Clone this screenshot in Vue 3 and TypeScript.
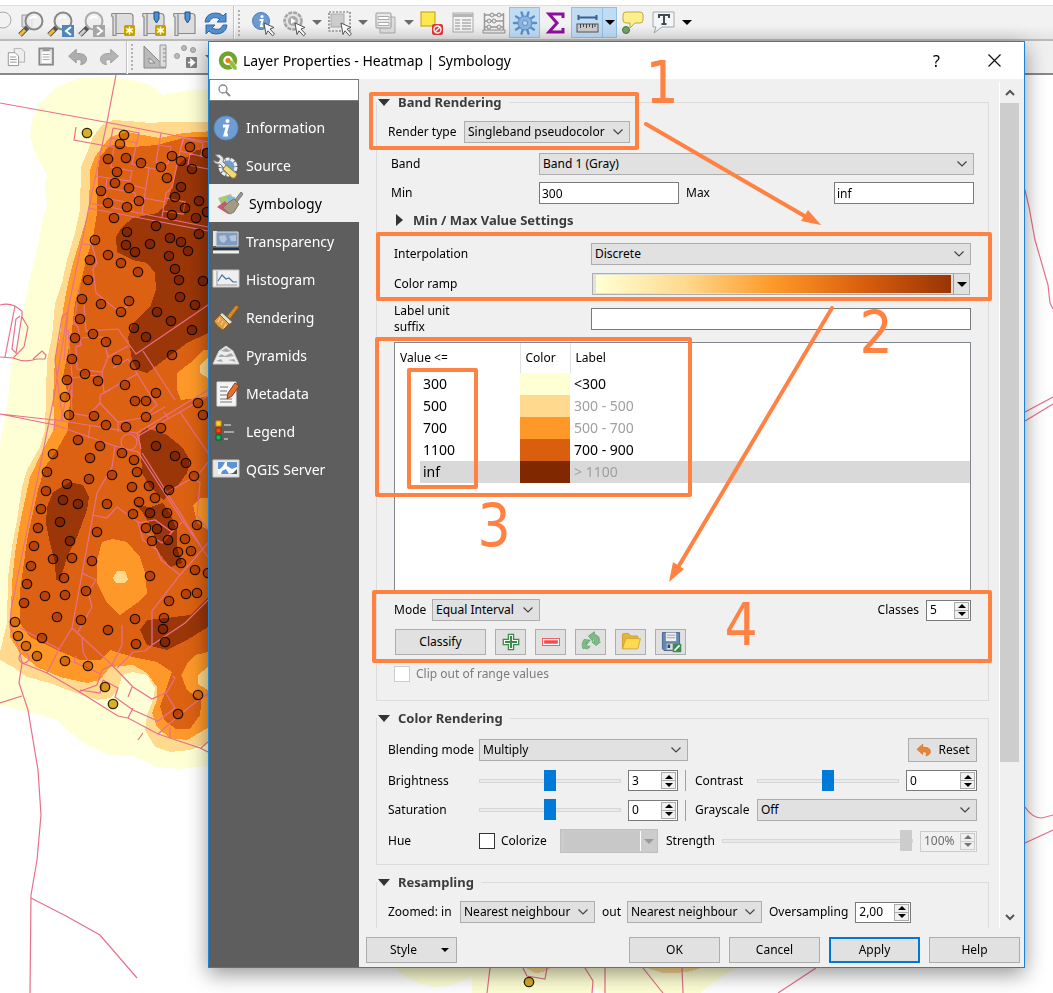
<script setup lang="ts">
import { ref } from 'vue'

interface Tool { icon: string; label: string; caret?: 'dark' | 'dim'; active?: boolean }
interface Page { icon: string; label: string }
interface Entry { value: string; color: string; label: string; auto: boolean }

const lens = (x: number, y: number, ring: string, handle: string) =>
  `<path d="M${x - 6} ${y + 6}L${x - 14} ${y + 14}" stroke="#555" stroke-width="5"/><path d="M${x - 9} ${y + 9}L${x - 14} ${y + 14}" stroke="${handle}" stroke-width="3"/><circle cx="${x}" cy="${y}" r="8.5" fill="#eee" fill-opacity=".8" stroke="${ring}" stroke-width="2"/><path d="M${x - 4} ${y - 2}q3-4 7-1" fill="none" stroke="#fff" stroke-width="2"/>`
const scroll = '<path d="M3 4.5h18q3 0 3 3v17H7v2H4V8q-2 0-1-3.5z" fill="#ddd" stroke="#8b8b8b" stroke-width="1.2"/><path d="M7 5v19" stroke="#8b8b8b" stroke-width="1.2"/>'
const star = '<rect x="15" y="16" width="11" height="11" rx="1.5" fill="#c4a000"/><path d="M20.5 17.500v8M17 19.500l7 4M17 23.500l7-4" stroke="#fff8c0" stroke-width="1.5"/><circle cx="20.5" cy="21.5" r="2" fill="#fff"/>'
const pin = '<path d="M14 3h5v7l-2.500 4-2.500-4z" fill="#4f8fc8" stroke="#1f4f86"/>'
const cursor = '<path d="M15 14l10 4.500-4 1.500 4.500 5-2 1.800-4.500-5-2 3.700z" fill="#fff" stroke="#555"/>'
const arrowBack = '<path d="M3 13l9-8v5q11-1 12 6 0 6-7 7 3-7-5-6v4z" stroke-width="1"/>'
const gearTeeth = (r: number) => {
  let d = ''
  for (let i = 0; i < 10; i++) {
    const a = (i * Math.PI) / 5
    d += `M${Math.round(14 + Math.cos(a) * (r - 5))} ${Math.round(14 + Math.sin(a) * (r - 5))}L${Math.round((14 + Math.cos(a) * r) * 10) / 10} ${Math.round((14 + Math.sin(a) * r) * 10) / 10}`
  }
  return d
}

const icons: Record<string, string> = {
  zoomLayer: `<path d="M6 6h10v12H6z" fill="#ddd" stroke="#999"/>${lens(18, 12, '#888', '#f0c030')}`,
  zoomLast: `${lens(16, 12, '#888', '#f0c030')}<rect x="15" y="16" width="12" height="12" fill="#4f86bd"/><path d="M24 18l-5 4 5 4" fill="none" stroke="#fff" stroke-width="2"/>`,
  zoomNext: `${lens(16, 12, '#aaa', '#ccc')}<rect x="15" y="16" width="12" height="12" fill="#a5a5a5"/><path d="M19 18l5 4-5 4" fill="none" stroke="#fff" stroke-width="2"/>`,
  newMap: scroll + star,
  newPin: scroll + pin + star,
  pinMap: scroll + pin,
  refresh: '<path d="M3 13q1-9 11-9 5 0 7 3l3-3v9h-9l3-3q-8-4-11 3zM25 16q-1 9-11 9-5 0-7-3l-3 3v-9h9l-3 3q8 4 11-3z" fill="#5590cf" stroke="#3068a8"/>',
  identify: `<circle cx="12" cy="12" r="8.5" fill="#6d9bd1" stroke="#4a7db8"/><circle cx="13" cy="7.5" r="1.5" fill="#fff"/><path d="M10.500 11h3l-1.500 6h2" fill="none" stroke="#fff" stroke-width="2"/>${cursor}`,
  action: `<circle cx="13" cy="12" r="8.5" fill="#e4e4e4" stroke="#a5a5a5" stroke-width="2.500" stroke-dasharray="4 1"/><circle cx="13" cy="12" r="5" fill="#aaa"/><path d="M11 9l5 3-5 3z" fill="#fff"/>${cursor}`,
  select: `<rect x="3" y="3" width="21" height="19" fill="none" stroke="#666" stroke-width="1.2" stroke-dasharray="2 1.5"/><rect x="5" y="5" width="13" height="13" fill="#ccc" stroke="#aaa"/>${cursor}`,
  forms: '<path d="M8 8h15v16H8z" fill="#ddd" stroke="#aaa"/><rect x="4" y="4" width="15" height="15" rx="1" fill="#e8e8e8" stroke="#999"/><path d="M6 7.500h11v3H6zM6 13.500h11v3H6z" fill="#fff" stroke="#aaa"/>',
  deselect: '<rect x="3" y="3" width="14" height="14" fill="#fce94f" stroke="#c4a000"/><rect x="14" y="15" width="11" height="11" rx="2" fill="#dd3b3b"/><circle cx="19.5" cy="20.5" r="3.5" fill="none" stroke="#fff" stroke-width="1.3"/><path d="M17 23l5-5" stroke="#fff" stroke-width="1.3"/>',
  tableIcon: '<rect x="4" y="4" width="20" height="19" fill="#f3f3f3" stroke="#aaa"/><path d="M4 5h20v3H4z" fill="#b5b5b5"/><path d="M6 11h5M6 14h5M6 17h5M6 20h5M13 11h9M13 14h9M13 17h9M13 20h9" stroke="#b0b0b0" stroke-width="1.5"/>',
  abacus: '<path d="M4.500 4v19M23.500 4v19M4 6h20M4 12h20M4 18h20" stroke="#999" stroke-width="1.5" fill="none"/><g fill="#e6e6e6" stroke="#909090"><circle cx="12" cy="6" r="2"/><circle cx="19" cy="6" r="2"/><circle cx="9" cy="12" r="2"/><circle cx="14" cy="12" r="2"/><circle cx="9" cy="18" r="2"/><circle cx="19" cy="18" r="2"/><path d="M3 21h22v3H3z"/></g>',
  toolbox: `<path d="${gearTeeth(11)}" stroke="#5b8ec6" stroke-width="2.500" stroke-linecap="round"/><circle cx="14" cy="14" r="7" fill="#8bb3e0" stroke="#5b8ec6"/><circle cx="14" cy="14" r="2.5" fill="#bcdaf3" stroke="#5b8ec6"/>`,
  sigma: '<path d="M21 9V5H7l8 9-8 9h14v-4" fill="none" stroke="#8e0f9c" stroke-width="3"/>',
  ruler: '<path d="M5 8.500h19M5.500 6v5M23.500 6v5" stroke="#3b5f92" stroke-width="2"/><rect x="4" y="15" width="21" height="8" fill="#ccc" stroke="#555"/><path d="M7.500 15v4M10.500 15v3M13.500 15v4M16.500 15v3M19.500 15v4M22 15v3" stroke="#444"/>',
  tip: '<path d="M7 3h14q3 0 3 3v5q0 3-3 3h-5l-5 5v-5H7q-3 0-3-3V6q0-3 3-3z" fill="#fcf08c" stroke="#c4a83c"/><circle cx="7" cy="21" r="3.5" fill="#6fa36f" stroke="#3f7a45"/>',
  annotate: '<path d="M3 3h21v15H12l-8 6 2-6H3z" fill="#f4f5f6" stroke="#a2aaae"/><path d="M9 9V6h10v3M14 6v9M11.500 15h5" fill="none" stroke="#444b50" stroke-width="2"/>',
  copy: '<path d="M12 4h8l4 4v12H12z" fill="#eee" stroke="#aaa"/><path d="M5 9h8l4 4v11H5z" fill="#fff" stroke="#888"/><path d="M7 14h7M7 17h8M7 20h8" stroke="#888"/>',
  paste: '<rect x="5" y="4" width="16" height="19" fill="#ddd" stroke="#888" stroke-width="2"/><path d="M9 3h8v4H9z" fill="#999"/><path d="M8 8h10v13H8z" fill="#fff"/><path d="M9 11h8M9 14h8M9 17h8" stroke="#999"/>',
  undo: `<g fill="#adadad" stroke="#989898">${arrowBack}</g>`,
  redo: `<g fill="#b4b4b4" stroke="#9c9c9c" transform="translate(28 0) scale(-1 1)">${arrowBack}</g>`,
  square: '<path d="M2 3v22h22z" fill="#bbb" stroke="#888"/><path d="M7 15v5h6z" fill="#eee" stroke="#888"/><path d="M18 2h6v22h-6z" fill="#ddd" stroke="#999"/><path d="M21 6h3M21 10h3M21 14h3M21 18h3" stroke="#888"/>',
  nodes: '<g fill="#bbb" stroke="#999"><circle cx="4" cy="13" r="2.5"/><circle cx="11" cy="5" r="2.5"/><circle cx="20" cy="7" r="2.5"/></g><rect x="13" y="14" width="11" height="11" rx="1" fill="#808080"/><path d="M15 19.500h4M18 16.500l3.500 3-3.500 3z" fill="#fff" stroke="#fff" stroke-width="1.5"/>',
  info: '<circle cx="14" cy="14" r="12" fill="#6d9dd3" stroke="#5688c2"/><circle cx="15.5" cy="7" r="2" fill="#fff"/><path d="M11 12h4.500l-2.500 9h3" fill="none" stroke="#fff" stroke-width="3"/>',
  source: '<circle cx="16" cy="15" r="8" fill="#6e9ed2" stroke="#eee" stroke-width="3" stroke-dasharray="4 1"/><path d="M3 3q5-2 8 2 1 3 0 5l7 6-3 3-7-7q-5 1-7-4l5 2 2-3z" fill="#e9e9e9" stroke="#777"/><path d="M14 13l11 9-2 4-3 0-9-9z" fill="#f1d977" stroke="#9a7e28"/>',
  symbology: '<path d="M3 8l13-4 3 8-12 4z" fill="#a8c77b"/><path d="M12 6l8 1 2 11-8-2z" fill="#86b6e0"/><path d="M2 17l8-6 8 10-5 3z" fill="#cd5577"/><path d="M14 12l5-3 5 5-5 8-4 2-7-6z" fill="#a39b84" stroke="#807966"/><path d="M20 10l6-8 2 2-6 8z" fill="#9a9a86" stroke="#777"/>',
  transparency: '<path d="M1 3h4v15H1z" fill="#e6e6e6"/><path d="M4 4h22v14H4z" fill="#7f9cc2" stroke="#ddd"/><path d="M7 8l6-1 2 4-3 4-4-2zM17 8l7-1v6l-5 0z" fill="#b5c5dc"/><path d="M1 20h26v2H1z" fill="#233347"/><path d="M1 22.500h26v3H1z" fill="#eee"/>',
  histogram: '<path d="M1 4h26v17H1z" fill="#efefef" stroke="#c4c4c4"/><path d="M5 5v15M5 19h20" stroke="#999"/><path d="M6 15l4-6 4 4 3-1 4 4 4 0" fill="none" stroke="#4474a8" stroke-width="1.2"/>',
  rendering: '<path d="M15 12L24 1l3 2-9 12z" fill="#d08c2c" stroke="#8f5a12"/><path d="M10 9l10 9-3 2L8 11z" fill="#e8e0cc"/><path d="M8 11l9 9-6 6q-6-3-9-9z" fill="#e0a048" stroke="#96601a"/><path d="M8 14l-2 4M11 17l-2 4M14 20l-2 4" stroke="#fadb9d"/>',
  pyramids: '<path d="M7 9l7-5 7 5 6 13H1z" fill="#eee" stroke="#ccc"/><path d="M9 9l5-3 5 3-4 1zM6 15l3-3 4 2 6-3 3 3-6 1zM4 19l5-2 2 3zM16 18l6-1 2 3z" fill="#a9a9a9"/>',
  metadata: '<path d="M5 2h19v24H5z" fill="#f4f4f4" stroke="#ddd"/><path d="M8 7h8M8 11h7M8 15h12M8 19h12M8 22h12" stroke="#777"/><path d="M16 13l7-10 4 3-7 10-5 3z" fill="#e76f30" stroke="#8f3d13"/>',
  legend: '<path d="M4 3h5v5H4z" fill="#ffd428" stroke="#e09000"/><path d="M4 10h5v5H4z" fill="#f14a1b" stroke="#a82200"/><path d="M4 17h5v5H4z" fill="#1bb368" stroke="#00602b"/><path d="M12 7h7M12 14h10M12 21h4" stroke="#a5a5a5" stroke-width="2"/>',
  server: '<path d="M1 4h26v17H1z" fill="#e8e8e8" stroke="#ccc"/><path d="M6 6h19v12H6z" fill="#fff"/><path d="M6 6h7l-2 4-3 3H6zM15 6h10v5l-5 2-5-3zM10 15l4-2 3 5H9z" fill="#5a94d4"/><path d="M25 13v5h-8l4-1z" fill="#555"/>',
  add: '<path d="M11 5h6v6h6v6h-6v6h-6v-6H5v-6h6z" fill="#fff" stroke="#3d8a4c" stroke-width="1.5"/><path d="M14 7v14M7 14h14" stroke="#3d8a4c" stroke-width="2.500"/>',
  remove: '<rect x="4" y="10" width="20" height="8" fill="#fff" stroke="#f34a4a"/><path d="M6 14h16" stroke="#f34a4a" stroke-width="4"/>',
  swap: '<path d="M13 12l-7-1q-4 6-1 11l2-1q3 3 6-2h-3q-3-2-1-5v3zM11 7l7-5v3q6 2 6 6l-1 3 2 0-5 4-5-4h3q1-4-2-4v3z" fill="#7fba89" stroke="#66a572"/>',
  open: '<path d="M4 22V6q0-2 2-2h5l3 3h8v5H9z" fill="#e2b53c" stroke="#c99a26"/><path d="M4 22l4-12h17l-3 12z" fill="#ffd94f" stroke="#d0a32c"/>',
  save: '<path d="M4 3h20v21H6l-2-2z" fill="#6688b3" stroke="#3a5c88"/><path d="M8 3h12v10H8z" fill="#eee"/><path d="M9 6h10M9 9h10" stroke="#999"/><path d="M9 16h9v7H9z" fill="#ddd"/><path d="M10 17h3v4h-3z" fill="#345"/><rect x="16" y="16" width="10" height="10" rx="1" fill="#3d8a4c"/><path d="M18 24l6-6" stroke="#fff" stroke-width="2"/>',
  reset: `<g fill="#e8853c" stroke="#d06a24">${arrowBack}</g>`,
}

const mapTools: Tool[] = [
  { icon: 'zoomLayer', label: 'Zoom to layer' }, { icon: 'zoomLast', label: 'Zoom last' }, { icon: 'zoomNext', label: 'Zoom next' },
  { icon: 'newMap', label: 'New map view' }, { icon: 'newPin', label: 'New bookmark' }, { icon: 'pinMap', label: 'Show bookmarks' }, { icon: 'refresh', label: 'Refresh' },
]
const attributeTools: Tool[] = [
  { icon: 'identify', label: 'Identify' }, { icon: 'action', label: 'Run action', caret: 'dim' }, { icon: 'select', label: 'Select', caret: 'dim' },
  { icon: 'forms', label: 'Select by form', caret: 'dim' }, { icon: 'deselect', label: 'Deselect' }, { icon: 'tableIcon', label: 'Attribute table' },
  { icon: 'abacus', label: 'Field calculator' }, { icon: 'toolbox', label: 'Processing toolbox', active: true }, { icon: 'sigma', label: 'Statistics' },
  { icon: 'ruler', label: 'Measure', caret: 'dark', active: true }, { icon: 'tip', label: 'Map tips' }, { icon: 'annotate', label: 'Text annotation', caret: 'dark' },
]
const editTools: Tool[] = [
  { icon: 'copy', label: 'Copy' }, { icon: 'paste', label: 'Paste' }, { icon: 'undo', label: 'Undo' }, { icon: 'redo', label: 'Redo' },
]
const digitizeTools: Tool[] = [{ icon: 'square', label: 'Advanced digitizing' }, { icon: 'nodes', label: 'Move features', caret: 'dim' }]

const pages: Page[] = [
  { icon: 'info', label: 'Information' }, { icon: 'source', label: 'Source' }, { icon: 'symbology', label: 'Symbology' },
  { icon: 'transparency', label: 'Transparency' }, { icon: 'histogram', label: 'Histogram' }, { icon: 'rendering', label: 'Rendering' },
  { icon: 'pyramids', label: 'Pyramids' }, { icon: 'metadata', label: 'Metadata' }, { icon: 'legend', label: 'Legend' }, { icon: 'server', label: 'QGIS Server' },
]
const current = ref('Symbology')

const entries: Entry[] = [
  { value: '300', color: '#ffffd4', label: '<300', auto: false },
  { value: '500', color: '#fed98e', label: '300 - 500', auto: true },
  { value: '700', color: '#fe9929', label: '500 - 700', auto: true },
  { value: '1100', color: '#d95f0e', label: '700 - 900', auto: false },
  { value: 'inf', color: '#802900', label: '> 1100', auto: true },
]
const selected = ref('inf')
const classTools: Tool[] = [
  { icon: 'add', label: 'Add value' }, { icon: 'remove', label: 'Remove value' }, { icon: 'swap', label: 'Invert ramp' },
  { icon: 'open', label: 'Load color map' }, { icon: 'save', label: 'Save color map' },
]

const min = ref('300')
const max = ref('inf')
const suffix = ref('')
const classes = ref('5')
const brightness = ref('3')
const saturation = ref('0')
const contrast = ref('0')
const strength = ref('100%')
const oversampling = ref('2,00')

const points: number[][] = [
  [87,133],[124,135],[120,144],[108,159],[126,158],[141,163],[117,172],[115,183],[129,188],[101,191],[108,203],[127,207],[139,201],[114,218],
  [161,167],[172,156],[181,161],[190,147],[192,169],[167,178],[181,187],[175,197],[199,201],[185,208],[172,215],[196,218],[156,226],[199,234],
  [127,232],[170,238],[181,242],[126,245],[150,244],[135,252],[188,251],[169,256],[95,240],[108,255],[121,263],[90,260],[138,272],[175,269],
  [179,280],[203,281],[88,280],[82,299],[101,304],[129,301],[121,312],[180,297],[195,305],[157,312],[171,321],[80,319],[134,328],[146,337],
  [192,330],[93,334],[106,342],[75,338],[72,359],[117,360],[172,355],[135,365],[85,374],[98,381],[67,380],[125,385],[156,393],[65,397],
  [207,153],[207,212],[135,401],[146,401],[69,415],[94,416],[106,425],[126,427],[146,417],[161,428],[198,403],[203,415],[78,440],[100,446],
  [53,454],[90,458],[122,453],[134,460],[156,446],[175,456],[186,463],[194,476],[47,472],[89,479],[112,475],[137,472],[132,487],[149,486],
  [155,498],[169,490],[67,484],[46,491],[63,500],[78,504],[107,504],[139,502],[41,509],[133,514],[150,513],[167,513],[60,522],[173,525],
  [197,525],[146,528],[157,529],[38,528],[97,532],[70,541],[152,541],[168,540],[185,539],[34,546],[178,552],[191,551],[53,559],[72,558],
  [92,561],[181,563],[31,566],[195,570],[208,573],[64,578],[150,576],[27,584],[86,591],[45,596],[65,595],[186,594],[197,593],[24,603],
  [169,601],[57,617],[135,619],[164,618],[81,620],[15,622],[108,630],[163,629],[18,636],[42,638],[165,642],[136,644],[26,646],[37,656],
  [65,661],[88,666],[105,687],[113,704],[198,695],[178,714],[529,982],
]

const roads = [
  'M0 103L105 122 208 142', 'M116 75L107 122 89 207 68 310 54 397 11 610 10 627 19 648 22 663 19 683 28 710 38 770 41 815 37 860 31 895 30 993',
  'M0 703L22 696', 'M31 898L66 916 100 935 137 978', 'M89 203L208 227M88 208L208 231', 'M76 127L74 140 112 147',
  'M113 128L110 145 114 147 111 167 132 171 130 181 95 176', 'M113 128L139 133 132 164 149 168 142 213', 'M111 138L137 143M149 168L167 171',
  'M161 133L156 162 168 164M158 145L171 147 168 164', 'M183 138L172 188 166 193 162 217', 'M166 198L185 202 183 214 163 211M144 198L165 202',
  'M180 151L208 158M190 153L188 165 208 169M183 138L203 143 201 156M180 151L184 138', 'M107 178L105 198 136 204 135 193 107 188M132 185L146 189',
  'M82 244L92 245 97 263 93 269 96 293 117 310 127 307 125 298', 'M84 305L86 331 118 329 136 354 208 305', 'M143 351L175 400',
  'M80 284L74 323 78 327 81 345 76 347 77 369 102 372 108 357 103 337 81 338', 'M108 357L128 346M113 368L128 359 147 390 157 405 143 418',
  'M100 395L137 374M102 372L104 393', 'M68 312L62 317 55 360 60 400 63 421', 'M72 398L72 378 97 375M61 420L72 375 68 330M68 312L64 360',
  'M0 305Q8 303 15 306L22 311 22 317 28 327 24 347 13 358Q25 363 37 359L45 359 46 355 42 351 33 359M15 306L5 357M0 357L13 358M20 316L16 319 12 349 16 353 22 315',
  'M0 414L63 421 137 433 208 390M0 414L55 425 115 446 138 452 182 520 208 557', 'M138 436L208 396M142 453L202 548M137 433L141 449',
  'M71 390L72 413 88 416 100 403 100 395 110 390M100 403L118 422 147 417 165 407M118 422L118 432M180 412L208 453',
  'M115 446L112 467 97 493 72 628 59 649 47 673', 'M93 515L107 518 117 507 138 522 143 540 157 550 161 560 180 575', 'M208 543L180 575 152 611 152 645',
  'M138 523L155 520 172 532 162 543 147 533M172 532L182 522', 'M208 600L185 623 152 645 145 651 133 652 117 668', 'M20 628L59 649',
  'M72 628L110 663 133 687 152 699 167 692 175 678 172 676', 'M82 637L83 652 88 661M122 625L122 645 112 665 102 670 97 685 78 692',
  'M22 663L47 673 78 691 118 716 128 718 158 734 200 748 208 752', 'M208 694L192 705 177 717 158 734M165 692L175 708 158 721 133 710 115 697 118 688 103 680',
  'M103 680L100 693 80 690M128 718L133 708M76 656L74 662 101 674M128 697L132 687M170 727L170 739M201 748L208 742', 'M82 573L96 580 88 592 92 607 78 632',
  'M167 492L198 475 208 462M188 473L200 483 197 515 208 530', 'M138 740L143 733', 'M90 426L88 438M164 412L168 418M55 418L54 430',
  'M1025 190L1029 207 1035 240 1048 285 1050 303 1053 309', 'M1025 807Q1032 818 1042 818L1053 815M1025 843L1053 830M1025 412L1053 397M1025 421L1053 404',
  'M490 968L487 993M523 968L527 976 545 979 547 968M585 968L590 976 593 981 592 993M605 968L605 993M643 968L663 993M682 968L683 993M816 968L778 993',
].join('')
</script>

<template>
  <div class="desktop">
    <svg class="map" width="1053" height="993" viewBox="0 0 1053 993" aria-hidden="true">
      <g shape-rendering="crispEdges">
        <path fill="#ffffd5" d="M230 90L190 90 173 93 163 95 150 85 133 80 110 77 80 78 57 87 40 103 32 120 30 137 35 153 47 175 45 183 47 207 43 217 37 250 30 277 25 303 20 337 12 357 8 400 0 445V705L20 710 40 715 57 720 67 730 87 745 110 755 133 756 143 760 157 767 180 769 230 763z" />
        <path fill="#fed98e" d="M230 122L163 122 150 123 128 121 113 120 102 125 93 137 87 153 81 167 80 210 75 233 67 260 62 283 55 303 52 337 47 360 45 430 40 447 27 470 22 487 17 520 12 547 8 577 7 623 0 652V660L13 667 27 677 50 683 73 692 97 700 110 698 118 690 122 675 133 672 147 675 155 688 153 700 147 715 145 730 155 747 170 752 190 750 230 735z" />
        <path fill="#fe9929" d="M230 130L183 133 160 138 143 135 127 132 110 137 102 147 95 157 90 170 89 210 82 233 73 263 68 283 63 310 60 337 55 357 53 400 55 427 43 450 30 477 25 500 20 523 15 553 12 583 10 637 20 653 37 667 60 677 87 683 100 680 110 667 133 665 147 673 157 687 157 700 152 713 157 727 170 738 187 740 230 715z" />
        <path fill="#dc6112" d="M230 137L187 137 157 145 133 147 110 145 100 157 98 170 97 213 93 237 87 257 82 277 75 303 72 330 67 357 63 377 70 400 68 430 57 450 45 467 38 490 32 517 27 540 23 570 20 590 20 623 30 637 57 650 80 660 100 660 110 650 133 657 157 662 172 672 166 690 160 706 164 720 176 729 190 729 200 715 202 695 195 685 181 676 187 664 195 655 230 647z" />
        <path fill="#fe9929" d="M177 390V373L190 363 203 350 230 348V394L181 400zM193 505L200 498 230 497V530H208L197 523zM102 542L113 539 127 542 140 557 145 573 147 593 137 603 120 615 107 603 97 583 97 560zM182 677L190 669 230 660V700H200L187 690z" />
        <path fill="#fed98e" d="M200 365L208 358V378L200 373zM117 571H125L128 579 124 583H116L113 578zM198 675L208 667V690L198 684z" />
        <path fill="#9b3608" d="M208 148L197 150 183 160 177 167 172 187 167 203 157 213 133 218 122 227 116 237 117 252 133 260 147 263 155 273 156 290 150 307 133 323 128 337 132 360 137 370 147 373 160 363 187 343 208 333zM47 507L53 492 70 482 83 485 89 497 87 510 77 537 67 557 60 581 56 580 55 563 50 543 46 523zM140 433L147 428 167 435 182 447 190 460 187 473 177 487 163 500 150 487 142 473zM135 505L150 507 163 503 170 513 177 530 177 547 182 563 170 567 157 550 153 530 143 513zM140 630L147 620 167 618 190 615 208 597V627L187 640 167 650 147 645z" />
        <path fill="#ffffd5" d="M394 967Q415 987 438 987 455 986 472 976V993H590L596 988 605 993H700Q720 977 737 967z" />
        <path fill="#fed98e" d="M525 967H552Q545 973 535 973zM644 967H702Q690 974 662 973z" />
      </g>
      <g fill="none" stroke="#e8708b" stroke-width="1.2">
        <path :d="roads" />
        <circle cx="129" cy="442" r="8" />
        <circle cx="24" cy="658" r="5" />
      </g>
      <g class="points" fill="#d7b02e" stroke="#2b2106" stroke-width="1.3">
        <circle v-for="(p, i) in points" :key="i" :cx="p[0]" :cy="p[1]" r="4.7" />
      </g>
    </svg>

    <div class="bars">
      <div class="bar">
        <svg class="clipped" viewBox="0 0 14 28" width="14" height="28" aria-hidden="true"><circle cx="3" cy="11" r="8" fill="#f2f2f2" stroke="#aaa" /></svg>
        <button v-for="t in mapTools" :key="t.icon" class="tool" :aria-label="t.label"><svg viewBox="0 0 28 28" width="28" height="28" v-html="icons[t.icon]" /></button>
        <span class="divider"></span><span class="grip"></span>
        <span v-for="t in attributeTools" :key="t.icon" class="pair" :class="{ active: t.active }">
          <button class="tool" :aria-label="t.label"><svg viewBox="0 0 28 28" width="28" height="28" v-html="icons[t.icon]" /></button>
          <button v-if="t.caret" class="caret" :class="t.caret" :aria-label="t.label + ' menu'"><i></i></button>
        </span>
      </div>
      <div class="bar">
        <button v-for="t in editTools" :key="t.icon" class="tool" :aria-label="t.label"><svg viewBox="0 0 28 28" width="24" height="24" v-html="icons[t.icon]" /></button>
        <span class="divider"></span><span class="grip"></span>
        <span v-for="t in digitizeTools" :key="t.icon" class="pair">
          <button class="tool" :aria-label="t.label"><svg viewBox="0 0 28 28" width="28" height="28" v-html="icons[t.icon]" /></button>
          <button v-if="t.caret" class="caret" :class="t.caret" :aria-label="t.label + ' menu'"><i></i></button>
        </span>
      </div>
    </div>

    <div class="dialog" role="dialog" aria-labelledby="dialog-title">
      <header class="titlebar">
        <svg viewBox="0 0 20 20" width="20" height="20" aria-hidden="true">
          <circle cx="10" cy="9.5" r="7" fill="none" stroke="#6fa52c" stroke-width="4.5" />
          <path d="M11 10l3-1 5 7v3h-3l-5-6z" fill="#8fbf3c" stroke="#fff" stroke-width=".6" />
          <circle cx="10" cy="9.5" r="2.5" fill="#ee7913" />
        </svg>
        <h1 id="dialog-title">Layer Properties - Heatmap | Symbology</h1>
        <button class="window-button">?</button>
        <button class="window-button close" aria-label="Close"><svg viewBox="0 0 13 13" width="13" height="13"><path d="M.5.5l12 12M12.500.5l-12 12" stroke="#111" stroke-width="1.2" /></svg></button>
      </header>

      <div class="body">
        <aside class="sidebar">
          <label class="search">
            <svg viewBox="0 0 14 14" width="14" height="14"><circle cx="6" cy="6" r="4" fill="none" stroke="#888" stroke-width="1.3" /><path d="M9 9l4 4" stroke="#888" stroke-width="1.8" /></svg>
            <input type="text" aria-label="Search" />
          </label>
          <nav>
            <button v-for="p in pages" :key="p.label" class="page" :class="{ current: current === p.label }" @click="current = p.label">
              <svg viewBox="0 0 28 28" width="28" height="28" aria-hidden="true" v-html="icons[p.icon]" />{{ p.label }}
            </button>
          </nav>
        </aside>

        <main class="main">
          <div class="viewport">
            <div class="groups">
              <fieldset class="group">
                <legend><i class="fold"></i>Band Rendering</legend>
                <div class="row first">
                  <label for="render" class="w76">Render type</label>
                  <span class="combo c166"><select id="render"><option>Singleband pseudocolor</option></select><svg viewBox="0 0 10 6" width="10" height="6"><path d="M.5.5L5 5 9.500.5" /></svg></span>
                </div>
                <div class="inner">
                  <div class="row">
                    <label for="band" class="w148">Band</label>
                    <span class="combo grow"><select id="band"><option>Band 1 (Gray)</option></select><svg viewBox="0 0 10 6" width="10" height="6"><path d="M.5.5L5 5 9.500.5" /></svg></span>
                  </div>
                  <div class="row near">
                    <label for="min" class="w148">Min</label>
                    <input id="min" v-model="min" class="field c140" type="text" />
                    <label for="max" class="push">Max</label>
                    <input id="max" v-model="max" class="field c140" type="text" />
                  </div>
                  <button class="subgroup"><i class="unfold"></i>Min / Max Value Settings</button>
                </div>
                <div class="deep">
                  <div class="row">
                    <label for="interp" class="w197">Interpolation</label>
                    <span class="combo grow"><select id="interp"><option>Discrete</option></select><svg viewBox="0 0 10 6" width="10" height="6"><path d="M.5.5L5 5 9.500.5" /></svg></span>
                  </div>
                  <div class="row">
                    <span class="w197">Color ramp</span>
                    <span class="ramp"><button class="ramp-face" aria-label="Color ramp"><b></b></button><button class="ramp-menu" aria-label="Choose color ramp"><i></i></button></span>
                  </div>
                  <div class="row">
                    <label for="suffix" class="w197"><span class="narrow">Label unit suffix</span></label>
                    <input id="suffix" v-model="suffix" class="field grow" type="text" />
                  </div>
                  <div class="tree">
                    <table>
                      <thead><tr><th class="col-value">Value &lt;=</th><th class="col-color">Color</th><th>Label</th></tr></thead>
                      <tbody>
                        <tr v-for="e in entries" :key="e.value" :class="{ picked: selected === e.value }" @click="selected = e.value">
                          <td class="value">{{ e.value }}</td>
                          <td :style="{ background: e.color }"></td>
                          <td :class="{ auto: e.auto }">{{ e.label }}</td>
                        </tr>
                      </tbody>
                    </table>
                  </div>
                  <div class="row near">
                    <label for="mode" class="w38">Mode</label>
                    <span class="combo c108"><select id="mode"><option>Equal Interval</option></select><svg viewBox="0 0 10 6" width="10" height="6"><path d="M.5.5L5 5 9.500.5" /></svg></span>
                    <span class="grow"></span>
                    <label for="classes">Classes</label>
                    <span class="spin s45 gap"><input id="classes" v-model="classes" type="text" /><span class="steps"><button aria-label="More"><i class="up"></i></button><button aria-label="Fewer"><i class="down"></i></button></span></span>
                  </div>
                  <div class="row class-tools">
                    <button class="push-button">Classify</button>
                    <button v-for="t in classTools" :key="t.icon" class="icon-button" :aria-label="t.label"><svg viewBox="0 0 28 28" width="24" height="24" v-html="icons[t.icon]" /></button>
                  </div>
                  <label class="check off"><input type="checkbox" disabled />Clip out of range values</label>
                </div>
              </fieldset>

              <fieldset class="group color">
                <legend><i class="fold"></i>Color Rendering</legend>
                <div class="row blend">
                  <label for="blend" class="w91">Blending mode</label>
                  <span class="combo c209"><select id="blend"><option>Multiply</option></select><svg viewBox="0 0 10 6" width="10" height="6"><path d="M.5.5L5 5 9.500.5" /></svg></span>
                  <span class="grow"></span>
                  <button class="reset"><svg viewBox="0 0 28 28" width="18" height="18" v-html="icons.reset" />Reset</button>
                </div>
                <div class="row">
                  <label for="brightness" class="w91">Brightness</label>
                  <input class="slider c142" type="range" min="-255" max="255" value="0" aria-label="Brightness" />
                  <span class="spin s50 gap"><input id="brightness" v-model="brightness" type="text" /><span class="steps"><button aria-label="Up"><i class="up"></i></button><button aria-label="Down"><i class="down"></i></button></span></span>
                  <span class="rule"></span>
                  <label for="contrast" class="w62">Contrast</label>
                  <input class="slider grow" type="range" min="-100" max="100" value="0" aria-label="Contrast" />
                  <span class="spin s71 gap"><input id="contrast" v-model="contrast" type="text" /><span class="steps"><button aria-label="Up"><i class="up"></i></button><button aria-label="Down"><i class="down"></i></button></span></span>
                </div>
                <div class="row">
                  <label for="saturation" class="w91">Saturation</label>
                  <input class="slider c142" type="range" min="-100" max="100" value="0" aria-label="Saturation" />
                  <span class="spin s50 gap"><input id="saturation" v-model="saturation" type="text" /><span class="steps"><button aria-label="Up"><i class="up"></i></button><button aria-label="Down"><i class="down"></i></button></span></span>
                  <span class="rule"></span>
                  <label for="gray" class="w62">Grayscale</label>
                  <span class="combo grow"><select id="gray"><option>Off</option></select><svg viewBox="0 0 10 6" width="10" height="6"><path d="M.5.5L5 5 9.500.5" /></svg></span>
                </div>
                <div class="row">
                  <span class="w91">Hue</span>
                  <label class="check colorize"><input type="checkbox" />Colorize</label>
                  <button class="swatch" disabled aria-label="Colorize color"><b></b><i></i></button>
                  <label for="strength" class="w64">Strength</label>
                  <input class="slider grow" type="range" min="0" max="100" value="100" disabled aria-label="Strength" />
                  <span class="spin s57 gap off"><input id="strength" v-model="strength" type="text" disabled /><span class="steps"><button disabled aria-label="Up"><i class="up"></i></button><button disabled aria-label="Down"><i class="down"></i></button></span></span>
                </div>
              </fieldset>

              <fieldset class="group open">
                <legend><i class="fold"></i>Resampling</legend>
                <div class="row first">
                  <label for="zin" class="w72">Zoomed: in</label>
                  <span class="combo c135"><select id="zin"><option>Nearest neighbour</option></select><svg viewBox="0 0 10 6" width="10" height="6"><path d="M.5.5L5 5 9.500.5" /></svg></span>
                  <label for="zout" class="w32">out</label>
                  <span class="combo c135"><select id="zout"><option>Nearest neighbour</option></select><svg viewBox="0 0 10 6" width="10" height="6"><path d="M.5.5L5 5 9.500.5" /></svg></span>
                  <label for="over" class="gap">Oversampling</label>
                  <span class="spin s56 gap"><input id="over" v-model="oversampling" type="text" /><span class="steps"><button aria-label="Up"><i class="up"></i></button><button aria-label="Down"><i class="down"></i></button></span></span>
                </div>
              </fieldset>
            </div>

            <div class="scrollbar">
              <button aria-label="Scroll up"><svg viewBox="0 0 10 7" width="10" height="7"><path d="M1 6l4-4 4 4" /></svg></button>
              <div class="track"><div class="thumb"></div></div>
              <button aria-label="Scroll down"><svg viewBox="0 0 10 7" width="10" height="7"><path d="M1 1l4 4 4-4" /></svg></button>
            </div>
          </div>

          <footer class="footer">
            <button class="push-button style">Style<i></i></button>
            <span class="grow"></span>
            <button class="push-button">OK</button>
            <button class="push-button">Cancel</button>
            <button class="push-button default">Apply</button>
            <button class="push-button">Help</button>
          </footer>
        </main>
      </div>
    </div>

    <svg class="notes" width="1053" height="993" viewBox="0 0 1053 993">
      <g fill="none" stroke="#ff8243" stroke-width="4" stroke-linejoin="round" stroke-linecap="round">
        <rect x="371" y="94" width="266" height="54" />
        <rect x="378" y="234" width="612" height="65" />
        <rect x="377" y="339" width="313" height="156" />
        <rect x="409" y="370" width="67" height="117" />
        <rect x="374" y="592" width="616" height="69" />
        <path d="M646 124L808 218M832 308L677 569" />
      </g>
      <path d="M821 225L801 221 808 210zM669 582L673 562 684 569z" fill="#ff8243" />
      <g class="digits">
        <text x="662" y="103">1</text>
        <text x="876" y="353">2</text>
        <text x="494" y="546">3</text>
        <text x="741" y="645">4</text>
      </g>
    </svg>
  </div>
</template>

<style>
html, body { margin: 0; background: #fff; }
</style>

<style scoped>
* { box-sizing: border-box; }
.desktop { position: relative; min-height: 100vh; overflow: hidden; background: #fff; padding: 41px 28px 25px 208px; font: 12px/16px "Noto Sans", "Open Sans", sans-serif; color: #000; }
button, input, select { font: inherit; color: inherit; margin: 0; padding: 0; border: 0; border-radius: 0; background: none; }
svg { display: block; flex: none; }
i, b { display: block; }
.map { position: absolute; left: 0; top: 0; }
.points { mix-blend-mode: multiply; }

.bars { position: absolute; left: 0; right: 0; top: 0; padding-top: 5px; background: #fff; border-bottom: 2px solid #84888d; }
.bar { display: flex; align-items: center; height: 34px; background: linear-gradient(#f2f2f2 60%, #e4e4e4); border-top: 1px solid #dedede; }
.bar + .bar { border-top: 2px solid #bababa; background: #f0f0f0; }
.tool { display: grid; place-items: center; width: 31px; height: 31px; flex: none; }
.divider { width: 2px; height: 33px; margin: 0 3px 0 2px; background: #c2c2c2; border-right: 1px solid #fff; flex: none; }
.grip { width: 2px; height: 26px; margin-right: 7px; background: repeating-linear-gradient(#b4b4b4 0 2px, transparent 2px 4px); flex: none; }
.pair { display: flex; flex: none; }
.pair.active { background: #bfdcf3; box-shadow: inset 0 0 0 1px #90c1ea; }
.pair.active .caret { border-left: 1px solid #90c1ea; }
.caret { display: grid; place-items: center; width: 15px; flex: none; }
.caret i { border: 5px solid transparent; border-top-color: #000; border-bottom: 0; }
.caret.dim i { border-top-color: #6b6b6b; }

.dialog { position: relative; border: 1px solid #1883d7; background: #f0f0f0; box-shadow: 0 6px 20px rgba(0, 0, 0, .42); }
.titlebar { display: flex; align-items: center; height: 37px; padding-left: 9px; background: #fff; }
.titlebar h1 { flex: 1; margin: 0 0 0 5px; font: 14px/20px "Noto Sans", sans-serif; }
.window-button { display: grid; place-items: center; width: 57px; height: 36px; font-size: 16px; }
.close { width: 58px; margin-right: 1px; }
.body { display: flex; }
.sidebar { width: 150px; flex: none; background: #5e5e5e; }
.search { display: flex; align-items: center; height: 22px; padding-left: 7px; background: #fff; border: 1px solid #7a7a7a; }
.search input { flex: 1; min-width: 0; outline: 0; }
.sidebar nav { padding-top: 7px; }
.page { display: flex; align-items: center; gap: 6px; width: 100%; height: 38px; padding: 1px 0 0 3px; color: #fff; font-size: 14px; text-align: left; }
.page.current { background: #f0f0f0; color: #000; padding-left: 6px; }

.main { flex: 1; min-width: 0; }
.viewport { display: flex; }
.groups { flex: 1; min-width: 0; padding: 14px 10px 0 17px; }
.group { min-width: 0; margin: 0 0 8px; padding: 0 0 18px; border: 1px solid #dcdcdc; }
.group.color { padding: 1px 11px 11px; }
.group.color legend { margin-left: -11px; }
.group.open { margin: 0; padding-bottom: 5px; border-bottom: 0; }
legend { display: flex; align-items: center; height: 18px; padding: 0 7px 0 1px; font-size: 13px; font-weight: bold; color: #3c3c3c; }
.fold { margin-right: 8px; border: 6px solid transparent; border-top: 7px solid #333; border-bottom: 0; }
.unfold { margin-right: 10px; border: 6px solid transparent; border-left: 7px solid #333; border-right: 0; }
.row { display: flex; align-items: center; margin-top: 8px; white-space: nowrap; }
.row.first { margin-top: 10px; padding-left: 11px; }
.row.near { margin-top: 7px; }
.row.blend { margin-top: 10px; }
.inner { padding: 2px 14px 0; }
.deep { padding: 6px 17px 0; }
.subgroup { display: flex; align-items: center; height: 18px; margin: 7px 0 0 5px; font-size: 13px; font-weight: bold; color: #3c3c3c; }
.grow { flex: 1; min-width: 0; }
.push { flex: 1; padding-left: 7px; }
.w32 { width: 32px; padding-left: 7px; }
.w38 { width: 38px; }
.w64 { width: 64px; padding-left: 8px; }
.w62 { width: 62px; }
.w72 { width: 72px; }
.w76 { width: 76px; }
.w91 { width: 91px; }
.w148 { width: 148px; }
.w197 { width: 197px; }
.narrow { display: block; width: 70px; white-space: normal; }
.c108 { width: 108px; }
.c135 { width: 135px; }
.c140 { width: 140px; }
.c142 { width: 142px; flex: none; }
.c166 { width: 166px; }
.c209 { width: 209px; }

.combo { position: relative; display: block; height: 22px; }
.combo select { display: block; width: 100%; height: 22px; padding: 0 20px 0 3px; appearance: none; background: #e1e1e1; border: 1px solid #adadad; }
.combo svg { position: absolute; right: 7px; top: 8px; pointer-events: none; fill: none; stroke: #444; stroke-width: 1.2; }
.field { height: 22px; padding: 0 2px; background: #fff; border: 1px solid #7a7a7a; }

.ramp { display: flex; flex: 1; height: 22px; margin: 0 1px; background: #e1e1e1; border: 1px solid #adadad; }
.ramp-face { flex: 1; padding: 1px 2px 1px 3px; border-right: 1px solid #999; }
.ramp-face b { height: 18px; background: linear-gradient(to right, #ffffd4, #fed98e 25%, #fe9929 50%, #d95f0e 75%, #993404); }
.ramp-menu { display: grid; place-items: center; width: 15px; }
.ramp-menu i { border: 5px solid transparent; border-top-color: #000; border-bottom: 0; }

.tree { min-height: 250px; margin-top: 7px; background: #fff; border: 1px solid #828790; }
table { width: 100%; border-collapse: collapse; table-layout: fixed; }
th { height: 30px; padding: 0 5px; font-weight: normal; text-align: left; border-right: 1px solid #e2e2e2; }
th:last-child { border-right: 0; }
.col-value { width: 125px; }
.col-color { width: 50px; }
td { height: 22px; padding: 0 0 0 4px; font-size: 14px; line-height: 20px; }
td.value { padding-left: 28px; }
.picked td { background: #d9d9d9; }
.picked td.value { background: linear-gradient(to right, transparent 25px, #d9d9d9 25px); }
.auto { color: #a0a0a0; }

.spin { display: flex; height: 21px; padding: 1px; background: #fff; border: 1px solid #7a7a7a; flex: none; }
.spin input { flex: 1; min-width: 0; padding-left: 2px; }
.gap { margin-left: 7px; }
.s45 { width: 45px; }
.s50 { width: 50px; }
.s56 { width: 56px; }
.s57 { width: 57px; }
.s71 { width: 71px; }
.steps { display: flex; flex-direction: column; width: 15px; }
.steps button { flex: 1; display: grid; place-items: center; background: #f0f0f0; border: 1px solid #acacac; }
.steps button + button { border-top: 0; }
.up { border: 4px solid transparent; border-bottom-color: #000; border-top: 0; }
.down { border: 4px solid transparent; border-top-color: #000; border-bottom: 0; }
.spin.off { background: #f0f0f0; border-color: #ccc; color: #6d6d6d; }
.spin.off .steps button { border-color: #ccc; }
.spin.off .up { border-bottom-color: #777; }
.spin.off .down { border-top-color: #777; }

.push-button { width: 91px; height: 26px; background: #e1e1e1; border: 1px solid #adadad; }
.icon-button { display: grid; place-items: center; width: 31px; height: 26px; background: #e1e1e1; border: 1px solid #adadad; }
.class-tools { gap: 9px; padding-left: 1px; }
.check { display: flex; align-items: center; gap: 6px; }
.check input { appearance: none; width: 16px; height: 16px; background: #fff; border: 1px solid #333; }
.check.off { margin-top: 11px; color: #7c7c7c; }
.check.off input { border-color: #ccc; }
.colorize { width: 81px; }
.reset { display: flex; align-items: center; justify-content: center; gap: 5px; width: 69px; height: 24px; background: #e1e1e1; border: 1px solid #adadad; }
.swatch { display: flex; align-items: center; width: 98px; height: 24px; padding: 1px 3px; background: #ccc; border: 1px solid #bfbfbf; }
.swatch b { flex: 1; height: 20px; background: #c8c8c8; border-right: 1px solid #fff; }
.swatch i { margin-left: 3px; border: 5px solid transparent; border-top-color: #999; border-bottom: 0; }
.rule { width: 1px; height: 21px; margin: 0 9px 0 7px; background: #a0a0a0; }
.slider { appearance: none; height: 21px; background: none; }
.slider::-webkit-slider-runnable-track { height: 4px; background: #e7eaea; border: 1px solid #d6d6d6; }
.slider::-webkit-slider-thumb { appearance: none; width: 12px; height: 21px; margin-top: -10px; background: #007ad9; border: 0; border-radius: 0; }
.slider:disabled::-webkit-slider-thumb { background: #ccc; }

.scrollbar { display: flex; flex-direction: column; width: 25px; padding-top: 3px; }
.scrollbar button { display: grid; place-items: center; height: 21px; width: 20px; border-left: 1px solid #fff; }
.scrollbar svg { fill: none; stroke: #555; stroke-width: 2; }
.track { flex: 1; width: 20px; border-left: 1px solid #fff; }
.thumb { height: 82%; background: #cdcdcd; }
.footer { display: flex; gap: 9px; padding: 9px 4px 4px 7px; }
.style { display: flex; align-items: center; padding-left: 23px; }
.style i { margin-left: 24px; border: 4px solid transparent; border-top-color: #000; border-bottom: 0; }
.default { border: 2px solid #0078d7; }

.notes { position: absolute; left: 0; top: 0; pointer-events: none; }
.digits { font: 58px "DejaVu Sans Condensed", "DejaVu Sans", sans-serif; fill: #ff8243; text-anchor: middle; }
</style>
